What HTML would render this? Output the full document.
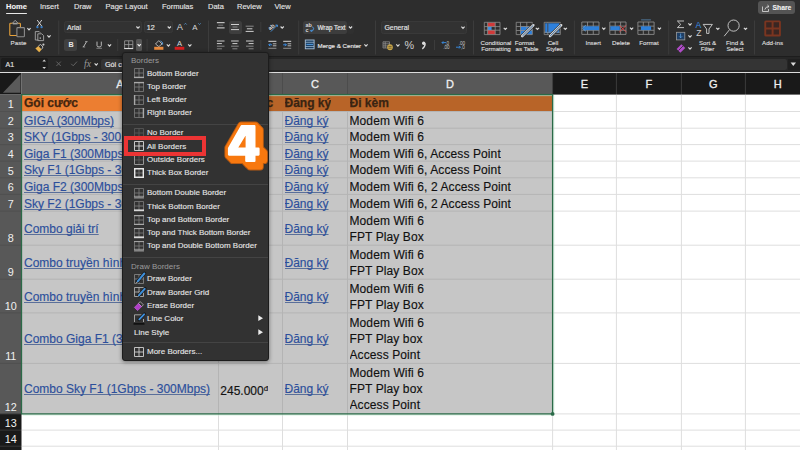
<!DOCTYPE html><html><head><meta charset="utf-8"><style>
*{box-sizing:border-box;margin:0;padding:0}
html,body{width:800px;height:450px;overflow:hidden;background:#2d2d2d;font-family:"Liberation Sans",sans-serif;position:relative}
.a{position:absolute}
.tab{position:absolute;top:2px;font-size:7.5px;color:#e6e6e6;line-height:10px;white-space:nowrap;-webkit-text-stroke:0.12px currentColor}
.rl{position:absolute;font-size:6.2px;color:#dcdcdc;line-height:7px;white-space:nowrap;text-align:center;-webkit-text-stroke:0.15px currentColor}
.ch{position:absolute;top:73px;height:22px;font-size:11px;color:#f0f0f0;text-align:center;line-height:22px;-webkit-text-stroke:0.3px #f0f0f0}
.rh{position:absolute;left:0;width:21.5px;font-size:10.8px;color:#f0f0f0;text-align:center}
.cell{position:absolute;font-size:12px;line-height:16px;color:#111;white-space:nowrap;overflow:hidden;-webkit-text-stroke:0.15px currentColor}
.lk{color:#2c4f9c;text-decoration:underline;text-underline-offset:1.4px;text-decoration-color:#5a6f9a;text-decoration-skip-ink:none}
.menu{position:absolute;left:122px;top:52px;width:147px;height:309px;background:#323232;border:1px solid #1c1c1c;border-radius:3px;box-shadow:0 1px 4px rgba(0,0,0,.45)}
.mi{position:absolute;left:24px;font-size:8px;color:#e6e6e6;white-space:nowrap;line-height:10px;-webkit-text-stroke:0.12px #e6e6e6}
.mh{position:absolute;left:8px;font-size:8px;color:#9c9c9c;white-space:nowrap;line-height:10px}
.ms{position:absolute;left:0;width:145px;height:1px;background:#444}
svg{position:absolute;left:0;top:0;overflow:visible}
</style></head><body>
<div class="tab" style="left:6px;font-weight:bold;color:#f4f4f4">Home</div>
<div class="tab" style="left:40px;">Insert</div>
<div class="tab" style="left:74px;">Draw</div>
<div class="tab" style="left:105.5px;">Page Layout</div>
<div class="tab" style="left:162px;">Formulas</div>
<div class="tab" style="left:208px;">Data</div>
<div class="tab" style="left:237px;">Review</div>
<div class="tab" style="left:274.5px;">View</div>
<div class="a" style="left:6px;top:12.5px;width:21px;height:1.6px;background:#e8e8e8;border-radius:1px"></div>
<div class="a" style="left:758px;top:1px;width:37px;height:13.2px;background:#545454;border-radius:3px"></div>
<div class="tab" style="left:772.5px;top:2.5px;font-size:6.8px;color:#f0f0f0;font-weight:bold">Share</div>
<div class="a" style="left:64px;top:20.6px;width:78px;height:12.699999999999996px;background:#323232;border-radius:2.5px;border:1px solid #393939"></div>
<div class="a" style="left:143.7px;top:20.6px;width:29.80000000000001px;height:12.699999999999996px;background:#323232;border-radius:2.5px;border:1px solid #393939"></div>
<div class="a" style="left:381px;top:20.5px;width:86px;height:13.200000000000003px;background:#323232;border-radius:2.5px;border:1px solid #393939"></div>
<div class="a" style="left:64.2px;top:38.7px;width:13.0px;height:12.699999999999996px;background:#404040;border-radius:2.5px;"></div>
<div class="a" style="left:136px;top:38.7px;width:6.400000000000006px;height:12.299999999999997px;background:#565656;border-radius:1.5px;"></div>
<div class="a" style="left:228.5px;top:20.8px;width:13.099999999999994px;height:12.999999999999996px;background:#3e3e3e;border-radius:2.5px;"></div>
<div class="a" style="left:303px;top:20.5px;width:44px;height:13.5px;background:#3d3d3d;border-radius:2.5px;"></div>
<div class="a" style="left:347px;top:20.5px;width:7px;height:13.5px;background:#303030;border-radius:2.5px;"></div>
<div class="rl" style="left:67px;top:23.5px;font-size:7px;color:#e4e4e4;font-weight:normal">Arial</div>
<div class="rl" style="left:146.7px;top:23.5px;font-size:7.2px;color:#e8e8e8;font-weight:normal">12</div>
<div class="rl" style="left:384.5px;top:23.5px;font-size:6.9px;color:#e4e4e4;font-weight:normal">General</div>
<div class="rl" style="left:-11.5px;width:60px;top:38.800000000000004px;font-size:6.2px;color:#dcdcdc">Paste</div>
<div class="rl" style="left:317.5px;top:23.7px;font-size:6.3px;color:#e8e8e8;font-weight:normal">Wrap Text</div>
<div class="rl" style="left:317.5px;top:41.7px;font-size:6.2px;color:#e8e8e8;font-weight:normal">Merge &amp; Center</div>
<div class="rl" style="left:466px;width:60px;top:38.800000000000004px;font-size:6.2px;color:#dcdcdc">Conditional</div>
<div class="rl" style="left:466px;width:60px;top:45.300000000000004px;font-size:6.2px;color:#dcdcdc">Formatting</div>
<div class="rl" style="left:494.5px;width:60px;top:38.800000000000004px;font-size:6.2px;color:#dcdcdc">Format</div>
<div class="rl" style="left:497px;width:60px;top:45.300000000000004px;font-size:6.2px;color:#dcdcdc">as Table</div>
<div class="rl" style="left:523px;width:60px;top:38.800000000000004px;font-size:6.2px;color:#dcdcdc">Cell</div>
<div class="rl" style="left:524.5px;width:60px;top:45.300000000000004px;font-size:6.2px;color:#dcdcdc">Styles</div>
<div class="rl" style="left:563.2px;width:60px;top:38.6px;font-size:6.2px;color:#dcdcdc">Insert</div>
<div class="rl" style="left:591px;width:60px;top:38.6px;font-size:6.2px;color:#dcdcdc">Delete</div>
<div class="rl" style="left:619px;width:60px;top:38.6px;font-size:6.2px;color:#dcdcdc">Format</div>
<div class="rl" style="left:677.5px;width:60px;top:38.7px;font-size:6.2px;color:#dcdcdc">Sort &amp;</div>
<div class="rl" style="left:677.5px;width:60px;top:45.2px;font-size:6.2px;color:#dcdcdc">Filter</div>
<div class="rl" style="left:705px;width:60px;top:38.7px;font-size:6.2px;color:#dcdcdc">Find &amp;</div>
<div class="rl" style="left:705px;width:60px;top:45.2px;font-size:6.2px;color:#dcdcdc">Select</div>
<div class="rl" style="left:742.5px;width:60px;top:38.7px;font-size:6.2px;color:#dcdcdc">Add-ins</div>
<div class="a" style="left:0;top:55.6px;width:800px;height:1.6px;background:#1d1d1d"></div>
<div class="a" style="left:0;top:57px;width:800px;height:15px;background:#262626"></div>
<div class="a" style="left:1px;top:58px;width:46.5px;height:12.4px;background:#1c1c1c;border-radius:2px"></div>
<div class="a" style="left:100.5px;top:58.6px;width:686px;height:11.6px;background:#343434;border-radius:2.5px"></div>
<div class="a" style="left:787.5px;top:58.6px;width:12.5px;height:11.6px;background:#1f1f1f"></div>
<div class="rl" style="left:5.5px;top:60.7px;font-size:7px;color:#e0e0e0">A1</div>
<div class="rl" style="left:105px;top:60.7px;font-size:7.2px;color:#e8e8e8">Gói cước</div>
<div class="a" style="left:0;top:71.8px;width:800px;height:1.3px;background:#dcdcdc"></div>
<svg width="800" height="75"><line x1="58.75" y1="20.5" x2="58.75" y2="54.5" stroke="#3c3c3c" stroke-width="1"/><line x1="208.5" y1="20.5" x2="208.5" y2="54.5" stroke="#3c3c3c" stroke-width="1"/><line x1="298.7" y1="20.5" x2="298.7" y2="54.5" stroke="#3c3c3c" stroke-width="1"/><line x1="375.5" y1="20.5" x2="375.5" y2="54.5" stroke="#3c3c3c" stroke-width="1"/><line x1="473.5" y1="20.5" x2="473.5" y2="54.5" stroke="#3c3c3c" stroke-width="1"/><line x1="574.4" y1="20.5" x2="574.4" y2="54.5" stroke="#3c3c3c" stroke-width="1"/><line x1="668.7" y1="20.5" x2="668.7" y2="54.5" stroke="#3c3c3c" stroke-width="1"/><line x1="754.5" y1="20.5" x2="754.5" y2="54.5" stroke="#3c3c3c" stroke-width="1"/><line x1="117.7" y1="39" x2="117.7" y2="51" stroke="#3c3c3c" stroke-width="1"/><line x1="147.1" y1="39" x2="147.1" y2="51" stroke="#3c3c3c" stroke-width="1"/><line x1="260.8" y1="22" x2="260.8" y2="32" stroke="#3c3c3c" stroke-width="1"/><line x1="260.8" y1="40" x2="260.8" y2="50" stroke="#3c3c3c" stroke-width="1"/><line x1="434.5" y1="40" x2="434.5" y2="50" stroke="#3c3c3c" stroke-width="1"/><rect x="9.8" y="23.2" width="10.6" height="12.3" fill="none" stroke="#e8a23a" stroke-width="1.1" rx="0.8"/><path d="M12.2 23.5 L15.2 20.3 L18.2 23.5" fill="#2d2d2d" stroke="#a0a0a0" stroke-width="1"/><rect x="12.8" y="22.8" width="4.8" height="1.6" fill="#a0a0a0"/><rect x="16.9" y="27.6" width="7.5" height="9.2" fill="#2d2d2d" stroke="#8c8c8c" stroke-width="1.1" rx="0.8"/><path d="M27.4 28.2 L29 29.9 L30.6 28.2" fill="none" stroke="#d8d8d8" stroke-width="1.15"/><path d="M37.2 20 L41.8 26.2 M41.8 20 L37.2 26.2" stroke="#e0e0e0" stroke-width="0.9"/><circle cx="37.4" cy="27.1" r="1.2" fill="#3a7fc8"/><circle cx="41.6" cy="27.1" r="1.2" fill="#3a7fc8"/><path d="M38.4 40 L35.3 40 L35.3 31.6 L39.2 31.6 L40.4 32.8" fill="none" stroke="#a8a8a8" stroke-width="0.9"/><path d="M37.8 33.8 L41.8 33.8 L43.6 35.6 L43.6 40.6 L37.8 40.6 Z" fill="none" stroke="#a8a8a8" stroke-width="0.9"/><rect x="39.6" y="37.4" width="1.4" height="1.4" fill="#a8a8a8"/><path d="M47.4 35.400000000000006 L49 37.1 L50.6 35.400000000000006" fill="none" stroke="#d8d8d8" stroke-width="1.15"/><path d="M35.4 48.6 L38.4 46 L41.6 49.4 L39.2 52.2 Z" fill="#e8b04a"/><path d="M38.4 46 L40.6 44.4 L43 47 L41.6 49.4" fill="none" stroke="#c8c8c8" stroke-width="0.9"/><circle cx="43.4" cy="44.6" r="1.1" fill="#c8c8c8"/><path d="M136.4 26.5 L138 28.2 L139.6 26.5" fill="none" stroke="#d8d8d8" stroke-width="1.15"/><path d="M167.70000000000002 26.5 L169.3 28.2 L170.9 26.5" fill="none" stroke="#d8d8d8" stroke-width="1.15"/><path d="M461.4 26.7 L463 28.4 L464.6 26.7" fill="none" stroke="#d8d8d8" stroke-width="1.15"/><text x="176.8" y="29.9" font-family="Liberation Sans" font-size="9.2" fill="#d8d8d8">A</text><path d="M184.3 24.6 L185.5 23.3 L186.7 24.6" fill="none" stroke="#5aa0e0" stroke-width="0.7"/><text x="192.3" y="29.9" font-family="Liberation Sans" font-size="7.8" fill="#d8d8d8">A</text><path d="M198.3 23.3 L199.5 24.6 L200.7 23.3" fill="none" stroke="#5aa0e0" stroke-width="0.7"/><text x="68.6" y="47" font-family="Liberation Sans" font-weight="bold" font-size="7.2" fill="#e8e8e8">B</text><path d="M86.6 41.6 L83.4 47" stroke="#c8c8c8" stroke-width="0.9"/><path d="M85 41.6 L87.6 41.6 M82.6 47 L85.2 47" stroke="#c8c8c8" stroke-width="0.6"/><path d="M97 41.6 L97 45.6 Q97 47 99.1 47 Q101.3 47 101.3 45.6 L101.3 41.6" fill="none" stroke="#c8c8c8" stroke-width="0.9"/><line x1="96.4" y1="48.3" x2="102" y2="48.3" stroke="#909090" stroke-width="0.8"/><path d="M107.9 44.400000000000006 L109.5 46.1 L111.1 44.400000000000006" fill="none" stroke="#d8d8d8" stroke-width="1.15"/><path d="M124.6 40.8 H132.8 V48.4 H124.6 Z M128.7 40.8 V48.4 M124.6 44.6 H132.8" fill="none" stroke="#a0a0a0" stroke-width="0.8"/><line x1="124.2" y1="48.6" x2="133.2" y2="48.6" stroke="#e8e8e8" stroke-width="1"/><path d="M137.6 44.2 L139.2 45.9 L140.79999999999998 44.2" fill="none" stroke="#eeeeee" stroke-width="1.15"/><path d="M155.5 44 L158.8 40.6 L162 44 L158.8 46.6 Z" fill="none" stroke="#d0d0d0" stroke-width="0.8"/><path d="M160.5 41 L162.6 42.6 L162.6 44.6" fill="none" stroke="#5aa0e0" stroke-width="1"/><rect x="154.2" y="46.8" width="9.2" height="3" fill="#e98a3e"/><path d="M166.8 44.400000000000006 L168.4 46.1 L170.0 44.400000000000006" fill="none" stroke="#d8d8d8" stroke-width="1.15"/><text x="177" y="46.2" font-family="Liberation Sans" font-size="7.6" fill="#d8d8d8">A</text><rect x="174.7" y="46.8" width="9.6" height="3" fill="#d81e1e"/><path d="M188.20000000000002 44.400000000000006 L189.8 46.1 L191.4 44.400000000000006" fill="none" stroke="#d8d8d8" stroke-width="1.15"/><line x1="216.9" y1="22.7" x2="224.6" y2="22.7" stroke="#e0e0e0" stroke-width="1"/><line x1="218.25" y1="25.2" x2="223.25" y2="25.2" stroke="#777" stroke-width="1"/><line x1="216.9" y1="27.9" x2="224.6" y2="27.9" stroke="#e0e0e0" stroke-width="1"/><line x1="231.0" y1="24.5" x2="239.0" y2="24.5" stroke="#cfcfcf" stroke-width="1"/><line x1="232.5" y1="27" x2="237.5" y2="27" stroke="#888" stroke-width="1"/><line x1="231.0" y1="29.6" x2="239.0" y2="29.6" stroke="#cfcfcf" stroke-width="1"/><line x1="245.64999999999998" y1="26.2" x2="253.64999999999998" y2="26.2" stroke="#888" stroke-width="1"/><line x1="246.89999999999998" y1="28.8" x2="252.39999999999998" y2="28.8" stroke="#cfcfcf" stroke-width="1"/><line x1="245.64999999999998" y1="31.4" x2="253.64999999999998" y2="31.4" stroke="#cfcfcf" stroke-width="1"/><line x1="216.9" y1="41" x2="224.5" y2="41" stroke="#cfcfcf" stroke-width="1"/><line x1="216.9" y1="43.6" x2="221.9" y2="43.6" stroke="#cfcfcf" stroke-width="1"/><line x1="216.9" y1="46.2" x2="224.5" y2="46.2" stroke="#888" stroke-width="1"/><line x1="216.9" y1="48.8" x2="221.9" y2="48.8" stroke="#888" stroke-width="1"/><line x1="231.1" y1="41" x2="238.70000000000002" y2="41" stroke="#cfcfcf" stroke-width="1"/><line x1="232.4" y1="43.6" x2="237.4" y2="43.6" stroke="#cfcfcf" stroke-width="1"/><line x1="231.1" y1="46.2" x2="238.70000000000002" y2="46.2" stroke="#888" stroke-width="1"/><line x1="232.4" y1="48.8" x2="237.4" y2="48.8" stroke="#888" stroke-width="1"/><line x1="246.0" y1="41" x2="253.6" y2="41" stroke="#cfcfcf" stroke-width="1"/><line x1="248.6" y1="43.6" x2="253.6" y2="43.6" stroke="#cfcfcf" stroke-width="1"/><line x1="246.0" y1="46.2" x2="253.6" y2="46.2" stroke="#888" stroke-width="1"/><line x1="248.6" y1="48.8" x2="253.6" y2="48.8" stroke="#888" stroke-width="1"/><g transform="rotate(-40 272 26)"><text x="267.6" y="28.2" font-family="Liberation Sans" font-weight="bold" font-size="5.6" fill="#d8d8d8">ab</text></g><path d="M270.8 31.6 L277.2 25.2 M275.4 25.2 L277.4 25 L277.2 27" fill="none" stroke="#4a9ae8" stroke-width="0.9"/><path d="M280.59999999999997 26.5 L282.2 28.2 L283.8 26.5" fill="none" stroke="#d8d8d8" stroke-width="1.15"/><line x1="268.4" y1="41.3" x2="276.4" y2="41.3" stroke="#d8d8d8" stroke-width="1"/><line x1="268.4" y1="48.3" x2="276.4" y2="48.3" stroke="#888" stroke-width="1.1"/><line x1="272.79999999999995" y1="43.8" x2="276.4" y2="43.8" stroke="#d8d8d8" stroke-width="0.8"/><line x1="272.79999999999995" y1="45.8" x2="276.4" y2="45.8" stroke="#d8d8d8" stroke-width="0.8"/><path d="M272.0 44.8 H268.79999999999995 M270.2 43.4 L268.79999999999995 44.8 L270.2 46.2" fill="none" stroke="#3a8ee6" stroke-width="1"/><line x1="283.2" y1="41.3" x2="291.2" y2="41.3" stroke="#d8d8d8" stroke-width="1"/><line x1="283.2" y1="48.3" x2="291.2" y2="48.3" stroke="#888" stroke-width="1.1"/><line x1="287.59999999999997" y1="43.8" x2="291.2" y2="43.8" stroke="#d8d8d8" stroke-width="0.8"/><line x1="287.59999999999997" y1="45.8" x2="291.2" y2="45.8" stroke="#d8d8d8" stroke-width="0.8"/><path d="M283.2 44.8 H286.4 M285.0 43.4 L286.4 44.8 L285.0 46.2" fill="none" stroke="#3a8ee6" stroke-width="1"/><text x="305.6" y="27" font-family="Liberation Sans" font-weight="bold" font-size="5.4" fill="#d8d8d8">ab</text><text x="305.6" y="31.6" font-family="Liberation Sans" font-weight="bold" font-size="5.4" fill="#d8d8d8">c</text><path d="M312.4 26.6 Q314.8 28.4 312.6 30.8 L310.6 30.8 M311.6 29.8 L310.6 30.8 L311.6 31.8" fill="none" stroke="#4a9ae8" stroke-width="1"/><path d="M348.9 26.5 L350.5 28.2 L352.1 26.5" fill="none" stroke="#d8d8d8" stroke-width="1.15"/><rect x="305.3" y="40" width="8.8" height="8.8" fill="#1d3f62" stroke="#a8c0d8" stroke-width="0.9"/><path d="M305.3 42.3 H314.1 M305.3 46.5 H314.1" stroke="#a8c0d8" stroke-width="0.7"/><path d="M306.4 44.4 H313" stroke="#5aa8f0" stroke-width="0.9"/><path d="M364.4 44.400000000000006 L366 46.1 L367.6 44.400000000000006" fill="none" stroke="#d8d8d8" stroke-width="1.15"/><path d="M383 41.8 H389.5 V48 H383 Z M383 43.8 H389.5 M383 45.9 H389.5 M385.2 41.8 V48" fill="none" stroke="#a8a8a8" stroke-width="0.6"/><ellipse cx="390" cy="47.3" rx="2.8" ry="3" fill="#caa84a"/><path d="M388.4 46.4 H391.6 M388.4 48.2 H391.6" stroke="#3a3020" stroke-width="0.6"/><path d="M396.29999999999995 44.400000000000006 L397.9 46.1 L399.5 44.400000000000006" fill="none" stroke="#d8d8d8" stroke-width="1.15"/><text x="404.6" y="49.2" font-family="Liberation Sans" font-size="10.8" fill="#cfcfcf">%</text><circle cx="423.7" cy="43.3" r="1.7" fill="#dcdcdc"/><path d="M425.2 43.5 Q425 47.2 422.3 48.9" fill="none" stroke="#dcdcdc" stroke-width="1.3"/><text x="445.2" y="44.6" font-family="Liberation Sans" font-size="4.6" fill="#c8c8c8">,0</text><text x="443.2" y="49.1" font-family="Liberation Sans" font-size="4.6" fill="#c8c8c8">.00</text><path d="M446 42.6 H442 M443.3 41.3 L442 42.6 L443.3 43.9" fill="none" stroke="#3a8ee6" stroke-width="0.9"/><text x="458.7" y="44.6" font-family="Liberation Sans" font-size="4.6" fill="#c8c8c8">.00</text><text x="461" y="49.1" font-family="Liberation Sans" font-size="4.6" fill="#c8c8c8">,0</text><path d="M456 47.2 H460.4 M459.1 45.9 L460.4 47.2 L459.1 48.5" fill="none" stroke="#3a8ee6" stroke-width="0.9"/><rect x="487.8" y="22.6" width="7.4" height="4.2" fill="#d03a3a"/><rect x="487.8" y="30" width="7.4" height="4.4" fill="#d03a3a"/><rect x="487.8" y="26.8" width="3.8" height="3.2" fill="#3a8ee6"/><path d="M484.3 22.3 H500 V34.6 H484.3 Z M484.3 26.6 H500 M484.3 30.2 H500 M487.6 22.3 V34.6 M495.2 22.3 V34.6" fill="none" stroke="#8e8e8e" stroke-width="0.8"/><path d="M503.7 27.8 L505.3 29.5 L506.90000000000003 27.8" fill="none" stroke="#d8d8d8" stroke-width="1.15"/><path d="M520.5 26.5 H532.3 V34.6 H520.5 Z" fill="#2e80dc"/><path d="M516.2 22.3 H532.3 V34.6 H516.2 Z M516.2 26.5 H532.3 M516.2 30.5 H532.3 M520.5 22.3 V34.6 M526.8000000000001 22.3 V34.6" fill="none" stroke="#8e8e8e" stroke-width="0.8"/><path d="M533.6 25 L522 36.4" stroke="#2d2d2d" stroke-width="3.6" stroke-linecap="round"/><path d="M533.4 25.2 L522.2 36.2" stroke="#e0e0e0" stroke-width="2.4" stroke-linecap="round"/><path d="M533.2 25.4 L522.4 36" stroke="#1d4f86" stroke-width="0.9"/><path d="M535.8 27.8 L537.4 29.5 L539.0 27.8" fill="none" stroke="#d8d8d8" stroke-width="1.15"/><rect x="545.2" y="23.3" width="14.099999999999909" height="9.8" fill="#2e80dc"/><path d="M544.2 22.3 H560.3 V34.6 H544.2 Z M544.2 32.2 H560.3 M547.8000000000001 22.3 V34.6" fill="none" stroke="#8e8e8e" stroke-width="0.8"/><path d="M547.8000000000001 22.900000000000002 V32.0" stroke="#16365c" stroke-width="0.8"/><path d="M561.4 25 L549.8 36.4" stroke="#2d2d2d" stroke-width="3.6" stroke-linecap="round"/><path d="M561.2 25.2 L550 36.2" stroke="#e0e0e0" stroke-width="2.4" stroke-linecap="round"/><path d="M561 25.4 L550.2 36" stroke="#1d4f86" stroke-width="0.9"/><path d="M563.6999999999999 27.8 L565.3 29.5 L566.9 27.8" fill="none" stroke="#d8d8d8" stroke-width="1.15"/><path d="M581.8 22 H599 V34.4 H581.8 Z M581.8 26.133333333333333 H599 M581.8 30.266666666666666 H599 M587.5333333333333 22 V34.4 M593.2666666666667 22 V34.4" fill="none" stroke="#8a8a8a" stroke-width="0.9"/><rect x="583.3" y="26.3" width="15.700000000000045" height="3.8" fill="#2e7fd8"/><path d="M585.8 25.2 L582.4 28.2 L585.8 31.2" fill="none" stroke="#5aa0e0" stroke-width="0.9"/><path d="M602.1999999999999 27.7 L603.8 29.4 L605.4 27.7" fill="none" stroke="#d8d8d8" stroke-width="1.15"/><path d="M609.8 22 H626 V34.4 H609.8 Z M609.8 26.133333333333333 H626 M609.8 30.266666666666666 H626 M615.1999999999999 22 V34.4 M620.6 22 V34.4" fill="none" stroke="#8a8a8a" stroke-width="0.9"/><rect x="610.3" y="26.3" width="9.5" height="3.8" fill="#2e7fd8"/><path d="M619.3 25.4 L626.3 32.0 M626.3 25.4 L619.3 32.0" stroke="#e04848" stroke-width="0.9"/><path d="M630.0 27.7 L631.6 29.4 L633.2 27.7" fill="none" stroke="#d8d8d8" stroke-width="1.15"/><path d="M637.9 22 H654.1 V34.4 H637.9 Z M637.9 26.133333333333333 H654.1 M637.9 30.266666666666666 H654.1 M643.3 22 V34.4 M648.7 22 V34.4" fill="none" stroke="#8a8a8a" stroke-width="0.9"/><rect x="640.9" y="26.3" width="10.200000000000045" height="3.8" fill="#2e7fd8"/><line x1="641.1" y1="19.9" x2="650.9" y2="19.9" stroke="#5a8ab8" stroke-width="0.8"/><path d="M657.8 27.7 L659.4 29.4 L661.0 27.7" fill="none" stroke="#d8d8d8" stroke-width="1.15"/><path d="M684 21 H677.4 L680.8 24.4 L677.4 27.6 H684" fill="none" stroke="#cfcfcf" stroke-width="0.9"/><path d="M688.4 23.4 L690 25.099999999999998 L691.6 23.4" fill="none" stroke="#d8d8d8" stroke-width="1.15"/><rect x="676.4" y="32.3" width="8.4" height="7.6" fill="#1e3f66" stroke="#9a9a9a" stroke-width="0.8"/><path d="M680.6 33.6 V37.8 M679.2 36.4 L680.6 37.8 L682 36.4" fill="none" stroke="#5aa0e0" stroke-width="0.8"/><path d="M688.4 35.400000000000006 L690 37.1 L691.6 35.400000000000006" fill="none" stroke="#d8d8d8" stroke-width="1.15"/><path d="M676.6 49 L681.4 44.2 L685.2 48 L680.4 52.8 Z" fill="#b04cc8"/><path d="M678.4 50.6 L683 46" stroke="#2b2b2b" stroke-width="0.8"/><path d="M688.4 47.400000000000006 L690 49.1 L691.6 47.400000000000006" fill="none" stroke="#d8d8d8" stroke-width="1.15"/><text x="695.6" y="27.6" font-family="Liberation Sans" font-size="8.6" fill="#3a8ee6">A</text><text x="696.2" y="35.6" font-family="Liberation Sans" font-size="8.6" fill="#cfcfcf">Z</text><path d="M703.2 24.4 H712.4 L709 29 V33.4 L706.6 33.4 V29 Z" fill="none" stroke="#cfcfcf" stroke-width="0.9" stroke-linejoin="round"/><path d="M716.1999999999999 27.8 L717.8 29.5 L719.4 27.8" fill="none" stroke="#d8d8d8" stroke-width="1.15"/><circle cx="733.6" cy="25.6" r="5.6" fill="none" stroke="#cfcfcf" stroke-width="0.9"/><line x1="729.6" y1="29.6" x2="724.2" y2="36.2" stroke="#cfcfcf" stroke-width="0.9"/><path d="M743.9 27.8 L745.5 29.5 L747.1 27.8" fill="none" stroke="#d8d8d8" stroke-width="1.15"/><rect x="764.3" y="20.4" width="16.6" height="16" rx="1.5" fill="#7a3520"/><path d="M766.2 22.3 h5.4 v5.2 h-5.4 Z M773.6 22.3 h5.4 v5.2 h-5.4 Z M766.2 29.4 h5.4 v5.2 h-5.4 Z M773.6 29.4 h5.4 v5.2 h-5.4 Z" fill="#3a2622"/><path d="M762.5 6.5 V11.5 H768.5 V9" fill="none" stroke="#e0e0e0" stroke-width="0.8"/><path d="M764.8 9.6 Q765.6 6.6 768.8 6.4 M767.4 5 L769 6.4 L767.4 7.8" fill="none" stroke="#e0e0e0" stroke-width="0.8"/><path d="M56.4 61.6 L60.8 66 M60.8 61.6 L56.4 66" stroke="#6a6a6a" stroke-width="0.9"/><path d="M71.2 63.8 L73.2 65.8 L77 61.6" fill="none" stroke="#6a6a6a" stroke-width="0.9"/><text x="84" y="66.6" font-family="Liberation Serif" font-style="italic" font-size="9.6" fill="#9a9a9a">fx</text><path d="M94.60000000000001 63.400000000000006 L96.2 65.10000000000001 L97.8 63.400000000000006" fill="none" stroke="#d8d8d8" stroke-width="1.15"/><path d="M42.4 61.4 L44.2 59.4 L46 61.4 Z M42.4 67 L44.2 69 L46 67 Z" fill="#cfcfcf"/><path d="M790.6 62.4 L796 62.4 L793.3 66 Z" fill="#d8d8d8"/></svg>
<div class="a" style="left:0;top:73px;width:800px;height:377px;background:#fff"></div>
<svg width="800" height="450"><rect x="0" y="73" width="21.5" height="21.6" fill="#191919"/><path d="M2.9 92.8 L20.5 74.3 L20.5 92.8 Z" fill="#5a5a5a"/><rect x="21.5" y="73" width="531.1" height="21.6" fill="#585858"/><rect x="552.6" y="73" width="247.39999999999998" height="21.6" fill="#191919"/><line x1="218.5" y1="73" x2="218.5" y2="94.6" stroke="#4c4c4c" stroke-width="1"/><line x1="282.5" y1="73" x2="282.5" y2="94.6" stroke="#4c4c4c" stroke-width="1"/><line x1="347.5" y1="73" x2="347.5" y2="94.6" stroke="#4c4c4c" stroke-width="1"/><line x1="552.6" y1="73" x2="552.6" y2="94.6" stroke="#3c3c3c" stroke-width="1"/><line x1="616.4" y1="73" x2="616.4" y2="94.6" stroke="#3c3c3c" stroke-width="1"/><line x1="681.4" y1="73" x2="681.4" y2="94.6" stroke="#3c3c3c" stroke-width="1"/><line x1="745.4" y1="73" x2="745.4" y2="94.6" stroke="#3c3c3c" stroke-width="1"/><rect x="0" y="94.6" width="21.5" height="319.29999999999995" fill="#585858"/><rect x="0" y="413.9" width="21.5" height="40" fill="#191919"/><line x1="0" y1="111.5" x2="21.5" y2="111.5" stroke="#505050" stroke-width="1"/><line x1="0" y1="128.2" x2="21.5" y2="128.2" stroke="#505050" stroke-width="1"/><line x1="0" y1="144.6" x2="21.5" y2="144.6" stroke="#505050" stroke-width="1"/><line x1="0" y1="161.1" x2="21.5" y2="161.1" stroke="#505050" stroke-width="1"/><line x1="0" y1="177.8" x2="21.5" y2="177.8" stroke="#505050" stroke-width="1"/><line x1="0" y1="194.4" x2="21.5" y2="194.4" stroke="#505050" stroke-width="1"/><line x1="0" y1="211.1" x2="21.5" y2="211.1" stroke="#505050" stroke-width="1"/><line x1="0" y1="245.2" x2="21.5" y2="245.2" stroke="#505050" stroke-width="1"/><line x1="0" y1="279.2" x2="21.5" y2="279.2" stroke="#505050" stroke-width="1"/><line x1="0" y1="312.9" x2="21.5" y2="312.9" stroke="#505050" stroke-width="1"/><line x1="0" y1="363.4" x2="21.5" y2="363.4" stroke="#505050" stroke-width="1"/><line x1="0" y1="413.9" x2="21.5" y2="413.9" stroke="#383838" stroke-width="1"/><line x1="0" y1="430.1" x2="21.5" y2="430.1" stroke="#383838" stroke-width="1"/><line x1="0" y1="446.2" x2="21.5" y2="446.2" stroke="#383838" stroke-width="1"/><rect x="21.5" y="94.6" width="531.1" height="319.29999999999995" fill="#c6c6c6"/><rect x="21.5" y="94.6" width="197.0" height="16.5" fill="#ec7e31"/><rect x="218.5" y="94.6" width="334.1" height="16.5" fill="#b86428"/><line x1="21.5" y1="111.5" x2="552.6" y2="111.5" stroke="#b4b4b4" stroke-width="1"/><line x1="552.6" y1="111.5" x2="800" y2="111.5" stroke="#dedede" stroke-width="1"/><line x1="21.5" y1="128.2" x2="552.6" y2="128.2" stroke="#b4b4b4" stroke-width="1"/><line x1="552.6" y1="128.2" x2="800" y2="128.2" stroke="#dedede" stroke-width="1"/><line x1="21.5" y1="144.6" x2="552.6" y2="144.6" stroke="#b4b4b4" stroke-width="1"/><line x1="552.6" y1="144.6" x2="800" y2="144.6" stroke="#dedede" stroke-width="1"/><line x1="21.5" y1="161.1" x2="552.6" y2="161.1" stroke="#b4b4b4" stroke-width="1"/><line x1="552.6" y1="161.1" x2="800" y2="161.1" stroke="#dedede" stroke-width="1"/><line x1="21.5" y1="177.8" x2="552.6" y2="177.8" stroke="#b4b4b4" stroke-width="1"/><line x1="552.6" y1="177.8" x2="800" y2="177.8" stroke="#dedede" stroke-width="1"/><line x1="21.5" y1="194.4" x2="552.6" y2="194.4" stroke="#b4b4b4" stroke-width="1"/><line x1="552.6" y1="194.4" x2="800" y2="194.4" stroke="#dedede" stroke-width="1"/><line x1="21.5" y1="211.1" x2="552.6" y2="211.1" stroke="#b4b4b4" stroke-width="1"/><line x1="552.6" y1="211.1" x2="800" y2="211.1" stroke="#dedede" stroke-width="1"/><line x1="21.5" y1="245.2" x2="552.6" y2="245.2" stroke="#b4b4b4" stroke-width="1"/><line x1="552.6" y1="245.2" x2="800" y2="245.2" stroke="#dedede" stroke-width="1"/><line x1="21.5" y1="279.2" x2="552.6" y2="279.2" stroke="#b4b4b4" stroke-width="1"/><line x1="552.6" y1="279.2" x2="800" y2="279.2" stroke="#dedede" stroke-width="1"/><line x1="21.5" y1="312.9" x2="552.6" y2="312.9" stroke="#b4b4b4" stroke-width="1"/><line x1="552.6" y1="312.9" x2="800" y2="312.9" stroke="#dedede" stroke-width="1"/><line x1="21.5" y1="363.4" x2="552.6" y2="363.4" stroke="#b4b4b4" stroke-width="1"/><line x1="552.6" y1="363.4" x2="800" y2="363.4" stroke="#dedede" stroke-width="1"/><line x1="552.6" y1="413.9" x2="800" y2="413.9" stroke="#dedede" stroke-width="1"/><line x1="21.5" y1="430.1" x2="800" y2="430.1" stroke="#dedede" stroke-width="1"/><line x1="21.5" y1="446.2" x2="800" y2="446.2" stroke="#dedede" stroke-width="1"/><line x1="218.5" y1="112" x2="218.5" y2="413.9" stroke="#b4b4b4" stroke-width="1"/><line x1="218.5" y1="413.9" x2="218.5" y2="450" stroke="#dedede" stroke-width="1"/><line x1="282.5" y1="112" x2="282.5" y2="413.9" stroke="#b4b4b4" stroke-width="1"/><line x1="282.5" y1="413.9" x2="282.5" y2="450" stroke="#dedede" stroke-width="1"/><line x1="347.5" y1="112" x2="347.5" y2="413.9" stroke="#b4b4b4" stroke-width="1"/><line x1="347.5" y1="413.9" x2="347.5" y2="450" stroke="#dedede" stroke-width="1"/><line x1="552.6" y1="94.6" x2="552.6" y2="450" stroke="#dedede" stroke-width="1"/><line x1="616.4" y1="94.6" x2="616.4" y2="450" stroke="#dedede" stroke-width="1"/><line x1="681.4" y1="94.6" x2="681.4" y2="450" stroke="#dedede" stroke-width="1"/><line x1="745.4" y1="94.6" x2="745.4" y2="450" stroke="#dedede" stroke-width="1"/><path d="M22.8 95.6 H553.8 M553.8 95.6 V415 M22.8 415 H553.8" fill="none" stroke="#c8ecd4" stroke-width="0.8"/><rect x="21.5" y="94.6" width="531.1" height="319.29999999999995" fill="none" stroke="#2b6a48" stroke-width="1.3"/><circle cx="552.6" cy="413.9" r="1.9" fill="#2b6a48"/></svg>
<div class="rh" style="top:97.2px;height:15px;line-height:15px">1</div>
<div class="rh" style="top:113.89999999999999px;height:15px;line-height:15px">2</div>
<div class="rh" style="top:130.29999999999998px;height:15px;line-height:15px">3</div>
<div class="rh" style="top:146.79999999999998px;height:15px;line-height:15px">4</div>
<div class="rh" style="top:163.5px;height:15px;line-height:15px">5</div>
<div class="rh" style="top:180.1px;height:15px;line-height:15px">6</div>
<div class="rh" style="top:196.79999999999998px;height:15px;line-height:15px">7</div>
<div class="rh" style="top:230.89999999999998px;height:15px;line-height:15px">8</div>
<div class="rh" style="top:264.9px;height:15px;line-height:15px">9</div>
<div class="rh" style="top:298.59999999999997px;height:15px;line-height:15px">10</div>
<div class="rh" style="top:349.09999999999997px;height:15px;line-height:15px">11</div>
<div class="rh" style="top:399.59999999999997px;height:15px;line-height:15px">12</div>
<div class="rh" style="top:415.8px;height:15px;line-height:15px">13</div>
<div class="rh" style="top:431.9px;height:15px;line-height:15px">14</div>
<div class="rh" style="top:448.09999999999997px;height:15px;line-height:15px">15</div>
<div class="ch" style="left:21.5px;width:197.0px">A</div>
<div class="ch" style="left:218.5px;width:64.0px">B</div>
<div class="ch" style="left:282.5px;width:65.0px">C</div>
<div class="ch" style="left:347.5px;width:205.10000000000002px">D</div>
<div class="ch" style="left:552.6px;width:63.799999999999955px">E</div>
<div class="ch" style="left:616.4px;width:65.0px">F</div>
<div class="ch" style="left:681.4px;width:64.0px">G</div>
<div class="ch" style="left:745.4px;width:64.60000000000002px">H</div>
<div class="cell" style="left:24px;top:94.8px;font-weight:bold;color:#45260f;-webkit-text-stroke:0.25px #45260f">Gói cước</div>
<div class="cell" style="left:220px;top:94.8px;width:61px;font-weight:bold;color:#3a2412;-webkit-text-stroke:0.25px #3a2412">Giá cước</div>
<div class="cell" style="left:284.5px;top:94.8px;font-weight:bold;color:#3a2412;-webkit-text-stroke:0.25px #3a2412">Đăng ký</div>
<div class="cell" style="left:349.5px;top:94.8px;font-weight:bold;color:#3a2412;-webkit-text-stroke:0.25px #3a2412">Đi kèm</div>
<div class="cell" style="left:24px;top:112.64999999999999px;width:195px"><span class="lk">GIGA (300Mbps)</span></div>
<div class="cell" style="left:284.5px;top:112.64999999999999px"><span class="lk">Đăng ký</span></div>
<div class="cell" style="left:349.5px;top:112.64999999999999px;letter-spacing:0.1px">Modem Wifi 6</div>
<div class="cell" style="left:24px;top:129.2px;width:195px"><span class="lk">SKY (1Gbps - 300Mbps)</span></div>
<div class="cell" style="left:284.5px;top:129.2px"><span class="lk">Đăng ký</span></div>
<div class="cell" style="left:349.5px;top:129.2px;letter-spacing:0.1px">Modem Wifi 6</div>
<div class="cell" style="left:24px;top:145.65px;width:195px"><span class="lk">Giga F1 (300Mbps)</span></div>
<div class="cell" style="left:284.5px;top:145.65px"><span class="lk">Đăng ký</span></div>
<div class="cell" style="left:349.5px;top:145.65px;letter-spacing:0.1px">Modem Wifi 6, Access Point</div>
<div class="cell" style="left:24px;top:162.25px;width:195px"><span class="lk">Sky F1 (1Gbps - 300Mbps)</span></div>
<div class="cell" style="left:284.5px;top:162.25px"><span class="lk">Đăng ký</span></div>
<div class="cell" style="left:349.5px;top:162.25px;letter-spacing:0.1px">Modem Wifi 6, Access Point</div>
<div class="cell" style="left:24px;top:178.90000000000003px;width:195px"><span class="lk">Giga F2 (300Mbps)</span></div>
<div class="cell" style="left:284.5px;top:178.90000000000003px"><span class="lk">Đăng ký</span></div>
<div class="cell" style="left:349.5px;top:178.90000000000003px;letter-spacing:0.1px">Modem Wifi 6, 2 Access Point</div>
<div class="cell" style="left:24px;top:195.55px;width:195px"><span class="lk">Sky F2 (1Gbps - 300Mbps)</span></div>
<div class="cell" style="left:284.5px;top:195.55px"><span class="lk">Đăng ký</span></div>
<div class="cell" style="left:349.5px;top:195.55px;letter-spacing:0.1px">Modem Wifi 6, 2 Access Point</div>
<div class="cell" style="left:24px;top:220.95px;width:195px"><span class="lk">Combo giải trí</span></div>
<div class="cell" style="left:284.5px;top:220.95px"><span class="lk">Đăng ký</span></div>
<div class="cell" style="left:349.5px;top:212.95px;letter-spacing:0.1px">Modem Wifi 6<br>FPT Play Box</div>
<div class="cell" style="left:24px;top:255.0px;width:195px"><span class="lk">Combo truyền hình</span></div>
<div class="cell" style="left:284.5px;top:255.0px"><span class="lk">Đăng ký</span></div>
<div class="cell" style="left:349.5px;top:247.0px;letter-spacing:0.1px">Modem Wifi 6<br>FPT Play Box</div>
<div class="cell" style="left:24px;top:288.84999999999997px;width:195px"><span class="lk">Combo truyền hình</span></div>
<div class="cell" style="left:284.5px;top:288.84999999999997px"><span class="lk">Đăng ký</span></div>
<div class="cell" style="left:349.5px;top:280.84999999999997px;letter-spacing:0.1px">Modem Wifi 6<br>FPT Play Box</div>
<div class="cell" style="left:24px;top:330.95px;width:195px"><span class="lk">Combo Giga F1 (300Mbps)</span></div>
<div class="cell" style="left:284.5px;top:330.95px"><span class="lk">Đăng ký</span></div>
<div class="cell" style="left:349.5px;top:314.95px;letter-spacing:0.1px">Modem Wifi 6<br>FPT Play box<br>Access Point</div>
<div class="cell" style="left:24px;top:381.45px;width:195px"><span class="lk">Combo Sky F1 (1Gbps - 300Mbps)</span></div>
<div class="cell" style="left:284.5px;top:381.45px"><span class="lk">Đăng ký</span></div>
<div class="cell" style="left:349.5px;top:365.45px;letter-spacing:0.1px">Modem Wifi 6<br>FPT Play box<br>Access Point</div>
<div class="cell" style="left:220.3px;top:381.45px">245.000<span style="font-size:8px;vertical-align:4px">đ</span></div>
<div class="menu">
<div class="mh" style="top:3.200000000000003px">Borders</div>
<div class="mh" style="top:208.5px">Draw Borders</div>
<div class="mi" style="top:15.500000000000005px">Bottom Border</div>
<svg width="10" height="10" style="left:11px;top:15.300000000000006px"><path d="M0.5 0.5 H9.5 V9.5 H0.5 Z M5 0.5 V9.5 M0.5 5 H9.5" fill="none" stroke="#7e7e7e" stroke-width="0.8"/><path d="M0 9.4 H10" fill="none" stroke="#a8a8a8" stroke-width="1.4"/></svg>
<div class="mi" style="top:28.699999999999996px">Top Border</div>
<svg width="10" height="10" style="left:11px;top:28.499999999999993px"><path d="M0.5 0.5 H9.5 V9.5 H0.5 Z M5 0.5 V9.5 M0.5 5 H9.5" fill="none" stroke="#7e7e7e" stroke-width="0.8"/><path d="M0 0.6 H10" fill="none" stroke="#a8a8a8" stroke-width="1.4"/></svg>
<div class="mi" style="top:42.00000000000001px">Left Border</div>
<svg width="10" height="10" style="left:11px;top:41.800000000000004px"><path d="M0.5 0.5 H9.5 V9.5 H0.5 Z M5 0.5 V9.5 M0.5 5 H9.5" fill="none" stroke="#7e7e7e" stroke-width="0.8"/><path d="M0.6 0 V10" fill="none" stroke="#a8a8a8" stroke-width="1.4"/></svg>
<div class="mi" style="top:55.199999999999996px">Right Border</div>
<svg width="10" height="10" style="left:11px;top:54.99999999999999px"><path d="M0.5 0.5 H9.5 V9.5 H0.5 Z M5 0.5 V9.5 M0.5 5 H9.5" fill="none" stroke="#7e7e7e" stroke-width="0.8"/><path d="M9.4 0 V10" fill="none" stroke="#a8a8a8" stroke-width="1.4"/></svg>
<div class="mi" style="top:75.4px">No Border</div>
<svg width="10" height="10" style="left:11px;top:75.20000000000002px"><path d="M0.5 0.5 H9.5 V9.5 H0.5 Z M5 0.5 V9.5 M0.5 5 H9.5" fill="none" stroke="#5a5a5a" stroke-width="0.8"/></svg>
<div class="mi" style="top:88.6px">All Borders</div>
<svg width="10" height="10" style="left:11px;top:88.4px"><path d="M0.5 0.5 H9.5 V9.5 H0.5 Z M5 0.5 V9.5 M0.5 5 H9.5" fill="none" stroke="#d8d8d8" stroke-width="0.9"/></svg>
<div class="mi" style="top:101.9px">Outside Borders</div>
<svg width="10" height="10" style="left:11px;top:101.70000000000002px"><path d="M5 0.5 V9.5 M0.5 5 H9.5" fill="none" stroke="#5e5e5e" stroke-width="0.8"/><path d="M0.5 0.5 H9.5 V9.5 H0.5 Z" fill="none" stroke="#a0a0a0" stroke-width="0.9"/></svg>
<div class="mi" style="top:115.1px">Thick Box Border</div>
<svg width="10" height="10" style="left:11px;top:114.9px"><path d="M5 0.5 V9.5 M0.5 5 H9.5" fill="none" stroke="#7a7a7a" stroke-width="0.8"/><path d="M0.7 0.7 H9.3 V9.3 H0.7 Z" fill="none" stroke="#e8e8e8" stroke-width="1.4"/></svg>
<div class="mi" style="top:135.2px">Bottom Double Border</div>
<svg width="10" height="10" style="left:11px;top:135.0px"><path d="M0.5 0.5 H9.5 V9.5 H0.5 Z M5 0.5 V9.5 M0.5 5 H9.5" fill="none" stroke="#7e7e7e" stroke-width="0.8"/><path d="M0 8.3 H10 M0 10 H10" fill="none" stroke="#a8a8a8" stroke-width="0.8"/></svg>
<div class="mi" style="top:148.5px">Thick Bottom Border</div>
<svg width="10" height="10" style="left:11px;top:148.3px"><path d="M0.5 0.5 H9.5 V9.5 H0.5 Z M5 0.5 V9.5 M0.5 5 H9.5" fill="none" stroke="#7e7e7e" stroke-width="0.8"/><path d="M0 9.3 H10" fill="none" stroke="#d8d8d8" stroke-width="1.8"/></svg>
<div class="mi" style="top:161.7px">Top and Bottom Border</div>
<svg width="10" height="10" style="left:11px;top:161.5px"><path d="M0.5 0.5 H9.5 V9.5 H0.5 Z M5 0.5 V9.5 M0.5 5 H9.5" fill="none" stroke="#7e7e7e" stroke-width="0.8"/><path d="M0 0.6 H10 M0 9.4 H10" fill="none" stroke="#a8a8a8" stroke-width="1.1"/></svg>
<div class="mi" style="top:174.9px">Top and Thick Bottom Border</div>
<svg width="10" height="10" style="left:11px;top:174.70000000000002px"><path d="M0.5 0.5 H9.5 V9.5 H0.5 Z M5 0.5 V9.5 M0.5 5 H9.5" fill="none" stroke="#7e7e7e" stroke-width="0.8"/><path d="M0 0.6 H10" fill="none" stroke="#a8a8a8" stroke-width="1.0"/><path d="M0 9.3 H10" fill="none" stroke="#d8d8d8" stroke-width="1.8"/></svg>
<div class="mi" style="top:188.1px">Top and Double Bottom Border</div>
<svg width="10" height="10" style="left:11px;top:187.9px"><path d="M0.5 0.5 H9.5 V9.5 H0.5 Z M5 0.5 V9.5 M0.5 5 H9.5" fill="none" stroke="#7e7e7e" stroke-width="0.8"/><path d="M0 0.6 H10" fill="none" stroke="#a8a8a8" stroke-width="1.0"/><path d="M0 8.3 H10 M0 10 H10" fill="none" stroke="#a8a8a8" stroke-width="0.8"/></svg>
<div class="mi" style="top:220.79999999999998px">Draw Border</div>
<svg width="10" height="10" style="left:11px;top:220.6px"><path d="M0.5 0.5 H9.5 V9.5 H0.5 Z M5 0.5 V9.5 M0.5 5 H9.5" fill="none" stroke="#8a8a8a" stroke-width="0.8"/><path d="M10.6 -0.8 L3.4 7.6" stroke="#1a1a1a" stroke-width="3.4" stroke-linecap="round"/><path d="M10.3 -0.5 L3.7 7.3" stroke="#3d8fdc" stroke-width="2" stroke-linecap="round"/><path d="M3.2 7.9 L2.4 9.2" stroke="#d0d0d0" stroke-width="1"/></svg>
<div class="mi" style="top:234.49999999999997px">Draw Border Grid</div>
<svg width="10" height="10" style="left:11px;top:234.29999999999998px"><path d="M0.5 0.5 H9.5 V9.5 H0.5 Z M5 0.5 V9.5 M0.5 5 H9.5" fill="none" stroke="#bdbdbd" stroke-width="0.8"/><path d="M11 1.6 L4.6 8.6" stroke="#1a1a1a" stroke-width="3.4" stroke-linecap="round"/><path d="M10.7 1.9 L4.9 8.3" stroke="#3d8fdc" stroke-width="2" stroke-linecap="round"/><path d="M4.4 8.9 L3.6 10" stroke="#d0d0d0" stroke-width="1"/></svg>
<div class="mi" style="top:247.79999999999998px">Erase Border</div>
<svg width="10" height="10" style="left:11px;top:247.6px"><path d="M0.4 6.4 L4.4 2.4 L7.6 5.6 L3.6 9.6 Z" fill="#b040c8"/><path d="M4.4 2.4 L6.2 0.6 L9.4 3.8 L7.6 5.6 Z" fill="none" stroke="#c8c8c8" stroke-width="0.7"/><path d="M0.4 6.4 L4.4 2.4 L7.6 5.6 L3.6 9.6 Z" fill="none" stroke="#d060e8" stroke-width="0.6"/></svg>
<div class="mi" style="top:260.8px">Line Color</div>
<svg width="10" height="10" style="left:11px;top:260.59999999999997px"><path d="M0.5 8 V0.8 H7.5 M9.5 5 V8" fill="none" stroke="#bdbdbd" stroke-width="0.8"/><path d="M10.4 0 L5 5.6" stroke="#1a1a1a" stroke-width="3.2" stroke-linecap="round"/><path d="M10.1 0.3 L5.3 5.3" stroke="#3d8fdc" stroke-width="1.8" stroke-linecap="round"/><rect x="-0.5" y="9.2" width="11" height="1.4" fill="#0a0a0a"/></svg>
<div class="mi" style="top:294.1px">More Borders...</div>
<svg width="10" height="10" style="left:11px;top:293.9px"><path d="M0.5 0.5 H9.5 V9.5 H0.5 Z M5 0.5 V9.5 M0.5 5 H9.5" fill="none" stroke="#d0d0d0" stroke-width="0.9"/></svg>
<div class="mi" style="left:11px;top:274.6px">Line Style</div>
<div class="ms" style="top:70.5px"></div>
<div class="ms" style="top:130.8px"></div>
<div class="ms" style="top:204px"></div>
<div class="ms" style="top:288.8px"></div>
<svg width="6" height="8" style="left:135.2px;top:262.2px"><path d="M0.3 0.3 L5 3.2 L0.3 6.1 Z" fill="#ececec"/></svg>
<svg width="6" height="8" style="left:135.2px;top:275.6px"><path d="M0.3 0.3 L5 3.2 L0.3 6.1 Z" fill="#ececec"/></svg>
</div>
<div class="a" style="left:124.3px;top:135.5px;width:81.7px;height:20.2px;border:4px solid #ec3434"></div>
<svg width="800" height="450" style="left:0;top:0"><path transform="translate(0 0)" d="M241 125.2 L255.4 125.2 L255.4 147.7 L259.5 147.7 L259.5 155.6 L255.4 155.6 L255.4 162 L245.3 162 L245.3 155.6 L228 155.6 L228 147.9 Z M245.7 135.2 L245.7 147.7 L238.1 147.7 Z" fill="#b85a12" stroke="#b85a12" stroke-width="7.2" stroke-linejoin="round"/><path transform="translate(1.2 1.2)" d="M241 125.2 L255.4 125.2 L255.4 147.7 L259.5 147.7 L259.5 155.6 L255.4 155.6 L255.4 162 L245.3 162 L245.3 155.6 L228 155.6 L228 147.9 Z M245.7 135.2 L245.7 147.7 L238.1 147.7 Z" fill="#b85a12" stroke="#b85a12" stroke-width="7.2" stroke-linejoin="round"/><path transform="translate(2.4 2.4)" d="M241 125.2 L255.4 125.2 L255.4 147.7 L259.5 147.7 L259.5 155.6 L255.4 155.6 L255.4 162 L245.3 162 L245.3 155.6 L228 155.6 L228 147.9 Z M245.7 135.2 L245.7 147.7 L238.1 147.7 Z" fill="#b85a12" stroke="#b85a12" stroke-width="7.2" stroke-linejoin="round"/><path transform="translate(3.6 3.6)" d="M241 125.2 L255.4 125.2 L255.4 147.7 L259.5 147.7 L259.5 155.6 L255.4 155.6 L255.4 162 L245.3 162 L245.3 155.6 L228 155.6 L228 147.9 Z M245.7 135.2 L245.7 147.7 L238.1 147.7 Z" fill="#b85a12" stroke="#b85a12" stroke-width="7.2" stroke-linejoin="round"/><path transform="translate(4.8 4.8)" d="M241 125.2 L255.4 125.2 L255.4 147.7 L259.5 147.7 L259.5 155.6 L255.4 155.6 L255.4 162 L245.3 162 L245.3 155.6 L228 155.6 L228 147.9 Z M245.7 135.2 L245.7 147.7 L238.1 147.7 Z" fill="#b85a12" stroke="#b85a12" stroke-width="7.2" stroke-linejoin="round"/><path transform="translate(0 0)" d="M241 125.2 L255.4 125.2 L255.4 147.7 L259.5 147.7 L259.5 155.6 L255.4 155.6 L255.4 162 L245.3 162 L245.3 155.6 L228 155.6 L228 147.9 Z M245.7 135.2 L245.7 147.7 L238.1 147.7 Z" fill="#f7780f" stroke="#f7780f" stroke-width="5.4" stroke-linejoin="round"/><path transform="translate(1.2 1.2)" d="M241 125.2 L255.4 125.2 L255.4 147.7 L259.5 147.7 L259.5 155.6 L255.4 155.6 L255.4 162 L245.3 162 L245.3 155.6 L228 155.6 L228 147.9 Z M245.7 135.2 L245.7 147.7 L238.1 147.7 Z" fill="#f7780f" stroke="#f7780f" stroke-width="5.4" stroke-linejoin="round"/><path transform="translate(2.4 2.4)" d="M241 125.2 L255.4 125.2 L255.4 147.7 L259.5 147.7 L259.5 155.6 L255.4 155.6 L255.4 162 L245.3 162 L245.3 155.6 L228 155.6 L228 147.9 Z M245.7 135.2 L245.7 147.7 L238.1 147.7 Z" fill="#f7780f" stroke="#f7780f" stroke-width="5.4" stroke-linejoin="round"/><path transform="translate(3.6 3.6)" d="M241 125.2 L255.4 125.2 L255.4 147.7 L259.5 147.7 L259.5 155.6 L255.4 155.6 L255.4 162 L245.3 162 L245.3 155.6 L228 155.6 L228 147.9 Z M245.7 135.2 L245.7 147.7 L238.1 147.7 Z" fill="#f7780f" stroke="#f7780f" stroke-width="5.4" stroke-linejoin="round"/><path transform="translate(4.8 4.8)" d="M241 125.2 L255.4 125.2 L255.4 147.7 L259.5 147.7 L259.5 155.6 L255.4 155.6 L255.4 162 L245.3 162 L245.3 155.6 L228 155.6 L228 147.9 Z M245.7 135.2 L245.7 147.7 L238.1 147.7 Z" fill="#f7780f" stroke="#f7780f" stroke-width="5.4" stroke-linejoin="round"/><path d="M241.6 126.2 L254.4 126.2 L254.4 148.7 L258.5 148.7 L258.5 154.6 L254.4 154.6 L254.4 161 L246.3 161 L246.3 154.6 L229 154.6 L229 148.2 Z M246.7 131.6 L246.7 148.7 L236.3 148.7 Z" fill="#ffffff" fill-rule="evenodd" stroke="#ffffff" stroke-width="2.2" stroke-linejoin="round"/></svg>
</body></html>
